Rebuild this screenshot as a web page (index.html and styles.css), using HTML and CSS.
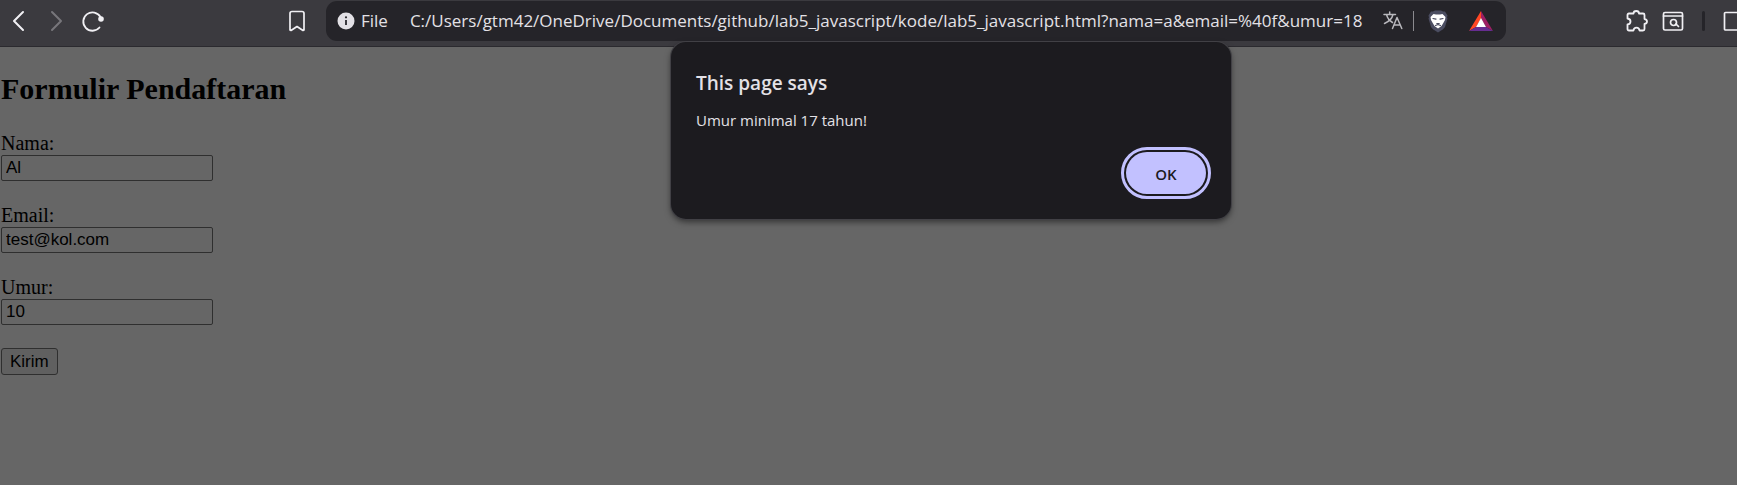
FILE: index.html
```html
<!DOCTYPE html>
<html lang="id">
<head>
<meta charset="utf-8">
<title>Formulir Pendaftaran</title>
<link rel="stylesheet" href="styles.css">
</head>
<body>
<header class="toolbar">
  <nav class="nav">
    <button class="icon-btn" aria-label="Back"><svg width="22" height="22" viewBox="0 0 22 22"><path d="M15 2 6 11l9 9" stroke-width="2"/></svg></button>
    <button class="icon-btn dim" aria-label="Forward"><svg width="22" height="22" viewBox="0 0 22 22"><path d="m7 2 9 9-9 9" stroke-width="2"/></svg></button>
    <button class="icon-btn" aria-label="Reload"><svg width="22" height="22" viewBox="0 0 22 22"><path d="M18.500 7A9.200 9.200 0 1 0 17.500 17.500" stroke-width="1.800"/><circle cx="19" cy="9" r="2.800" fill="currentColor" stroke="none"/></svg></button>
  </nav>
  <button class="icon-btn bookmark" aria-label="Bookmark"><svg width="22" height="22" viewBox="0 0 22 22"><path d="M6 1.500h10a2 2 0 0 1 2 2V20l-1 .5-6-4-6 4-1-.5V3.500a2 2 0 0 1 2-2z" stroke-width="1.700"/></svg></button>
  <div class="address">
    <svg class="info" width="18" height="18" viewBox="0 0 18 18"><circle cx="9" cy="9" r="8.500" fill="#e3e1e6"/><path d="M9 8v5" stroke="#29282d" stroke-width="1.800"/><circle cx="9" cy="5.300" r="1.100" fill="#29282d"/></svg>
    <span class="scheme">File</span>
    <span class="url">C:/Users/gtm42/OneDrive/Documents/github/lab5_javascript/kode/lab5_javascript.html?nama=a&amp;email=%40f&amp;umur=18</span>
    <button class="icon-btn translate" aria-label="Translate"><svg width="20" height="20" viewBox="0 0 20 20"><path d="M1 3.500h11.500M6.700 1v2.500M3.500 3.500c1 4 3.500 6.500 6 8M10 3.500C9 8 5 11 1.500 12.500M9.500 17.500l4.500-11 4.800 11M11 14h6.300" stroke-width="1.500"/></svg></button>
    <span class="address-divider"></span>
    <button class="icon-btn shield" aria-label="Shields"><svg width="20" height="23" viewBox="0 0 20 23"><path d="M5 1.500 7 .5h6l2 1 2 0 2.500 4-.5 2 .5 1-2.500 8.500q-1 2-7 5.500-6-3.500-7-5.500L.500 8.500l.5-1-.5-2 2.500-4z" fill="#4b4d61" stroke="none"/><path d="M5.500 4 8 4.500h4l2.500-.5 3 3-.5 3-2 3.500-1.500 2.500L10 18.500 6.500 16 5 13.500 3 10l-.500-3z" fill="#fff" stroke="none"/><path d="m5 8.500 3 .7M15 8.500l-3 .7M8.800 13.500h2.400M7.500 15.500l2.500-1 2.500 1" stroke="#4b4d61" stroke-width="1.200"/></svg></button>
    <button class="icon-btn rewards" aria-label="Rewards"><svg width="24" height="20" viewBox="0 0 24 20"><path d="M12 0 0 20l7-4 5-8.500z" fill="#ff4724" stroke="none"/><path d="m12 0 12 20-7-4-5-8.500z" fill="#9e1f63" stroke="none"/><path d="M0 20h24l-7-4H7z" fill="#662d91" stroke="none"/><path d="m12 7 5 9H7z" fill="#fff" stroke="none"/></svg></button>
  </div>
  <div class="tools">
    <button class="icon-btn" aria-label="Extensions"><svg width="22" height="22" viewBox="0 0 22 22"><path d="M3 3.500h4.500C7.500 1.800 8.600 1 10.300 1s2.700.8 2.700 2.500h4q1.500 0 1.500 1.500v4c1.500.3 2.500 1.200 2.500 2.500s-1 2.200-2.500 2.500v5q0 1.500-1.500 1.500h-3.500c-.2-1.800-1.300-2.800-3-2.800s-2.800 1-3 2.800H3q-1.500 0-1.500-1.500v-4.500c2-.2 3-1.500 3-3s-1-2.800-3-3V5Q1.500 3.500 3 3.500z" stroke-width="1.800"/></svg></button>
    <button class="icon-btn" aria-label="Search tabs"><svg width="22" height="22" viewBox="0 0 22 22"><rect x="1.500" y="2.500" width="19" height="17.500" rx="1.500" stroke-width="1.700"/><path d="M1.500 6h19m-6.500 8 2.500 2.500" stroke-width="1.700"/><circle cx="11.500" cy="12.500" r="3" stroke-width="1.700"/></svg></button>
    <span class="tools-divider"></span>
    <button class="icon-btn" aria-label="Sidebar"><svg width="22" height="22" viewBox="0 0 22 22"><rect x="1.500" y="2.500" width="19" height="17.500" rx="1" stroke-width="1.700"/></svg></button>
  </div>
</header>
<main class="page">
  <h2 class="title">Formulir Pendaftaran</h2>
  <form class="form">
    <div class="field"><label for="nama">Nama:</label><input id="nama" type="text" value="Al"></div>
    <div class="field"><label for="email">Email:</label><input id="email" type="text" value="test@kol.com"></div>
    <div class="field"><label for="umur">Umur:</label><input id="umur" type="text" value="10"></div>
    <button class="submit" type="button">Kirim</button>
  </form>
</main>
<section class="dialog" role="alertdialog" aria-labelledby="dialog-title" aria-describedby="dialog-text">
  <h1 class="dialog-title" id="dialog-title">This page says</h1>
  <p class="dialog-text" id="dialog-text">Umur minimal 17 tahun!</p>
  <button class="ok" type="button">OK</button>
</section>
</body>
</html>
```

FILE: styles.css
```css
* { box-sizing: border-box; }
body {
  margin: 0;
  min-height: 100vh;
  background: #666;
  overflow: hidden;
}
.toolbar {
  display: flex;
  align-items: center;
  padding: 1px 0 5px 8px;
  background: #3b3a3f;
  border-bottom: 1px solid #2b2a2f;
  font-family: "Open Sans", "Noto Sans", sans-serif;
}
.icon-btn {
  display: flex;
  flex: none;
  padding: 0;
  border: 0;
  background: none;
  color: #f1f0f4;
}
.icon-btn svg {
  fill: none;
  stroke: currentColor;
  stroke-linecap: round;
  stroke-linejoin: round;
}
.dim { color: #77767b; }
.nav { display: flex; gap: 15px; }
.bookmark { margin: 0 18px 0 182px; }
.address {
  display: flex;
  align-items: center;
  flex: 1;
  min-width: 0;
  height: 40px;
  padding: 0 13px 0 11px;
  border-radius: 11px;
  background: #252429;
  color: #e3e1e6;
  font-size: 17px;
  line-height: 22px;
}
.info { flex: none; fill: none; }
.scheme { margin: 0 22px 0 6px; }
.url { flex: 1; min-width: 0; overflow: hidden; white-space: nowrap; }
.translate { color: #b9b8bd; }
.address-divider { width: 1px; height: 20px; margin: 0 14px 0 10px; background: #8b8a8f; }
.rewards { margin-left: 21px; }
.tools {
  display: flex;
  align-items: center;
  gap: 14px;
  margin: 0 -8px 0 120px;
}
.tools-divider { width: 3px; height: 20px; margin: 0 4px; border-radius: 2px; background: #252429; }
.page {
  padding: 25px 1px 0;
  font-family: "Liberation Serif", serif;
  font-size: 20px;
  line-height: 23px;
  color: #000;
}
.title { margin: 0 0 26px; font-size: 30px; line-height: 34px; }
.field { display: flex; flex-direction: column; align-items: flex-start; margin-bottom: 23px; }
.field input {
  width: 212px;
  height: 26px;
  padding: 1px 4px;
  border: 1px solid #2f2f2f;
  border-radius: 2px;
  background: #666;
  color: #000;
  font: 17px "Liberation Sans", sans-serif;
}
.submit {
  display: block;
  height: 27px;
  padding: 1px 8px;
  border: 1px solid #2f2f2f;
  border-radius: 3px;
  background: #606060;
  color: #000;
  font: 17px "Liberation Sans", sans-serif;
}
.dialog {
  position: absolute;
  top: 42px;
  left: 671px;
  display: flex;
  flex-direction: column;
  width: 560px;
  padding: 26px 25px 25px;
  border-radius: 15px;
  background: #1c1b1f;
  box-shadow: 0 0 0 1px #414045, 0 3px 6px rgba(0, 0, 0, .5);
  color: #e3e1e6;
  font-family: "Open Sans", "Noto Sans", sans-serif;
}
.dialog-title { margin: 0 0 10px; font-size: 19px; font-weight: 600; line-height: 30px; }
.dialog-text { margin: 0 0 19px; font-size: 15px; line-height: 25px; }
.ok {
  align-self: flex-end;
  width: 80px;
  height: 42px;
  padding: 2px 0 0;
  border: 0;
  border-radius: 21px;
  outline: 3px solid #c2c1ff;
  outline-offset: 2px;
  background: #c2c1ff;
  color: #1c1b1f;
  font: 600 15px "Open Sans", "Noto Sans", sans-serif;
}
```
